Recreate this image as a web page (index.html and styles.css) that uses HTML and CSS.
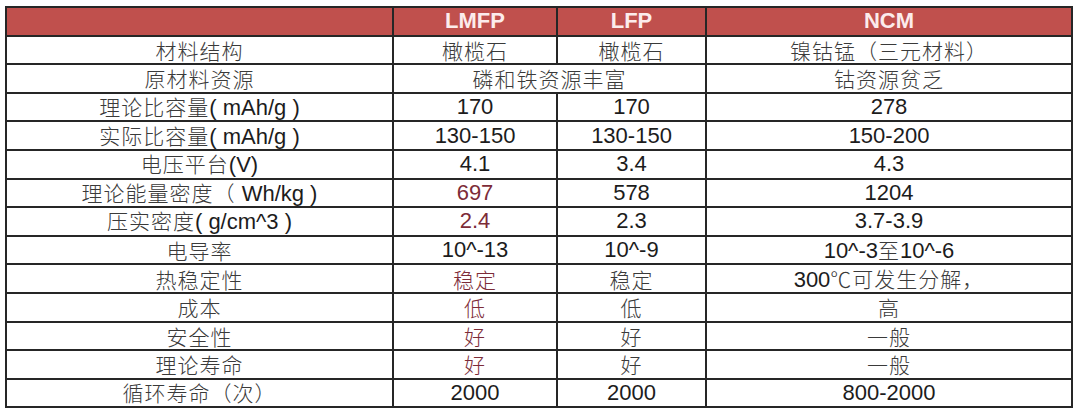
FILE: index.html
```html
<!DOCTYPE html>
<html lang="zh-CN">
<head>
<meta charset="utf-8">
<title>LMFP LFP NCM 对比</title>
<link rel="stylesheet" href="styles.css">
</head>
<body>
<table class="cmp">
  <colgroup>
    <col class="c1"><col class="c2"><col class="c3"><col class="c4">
  </colgroup>
  <thead>
    <tr><th></th><th>LMFP</th><th>LFP</th><th>NCM</th></tr>
  </thead>
  <tbody>
    <tr><td class="zh">材料结构</td><td class="zh">橄榄石</td><td class="zh">橄榄石</td><td class="zh">镍钴锰（三元材料）</td></tr>
    <tr><td class="zh">原材料资源</td><td class="zh" colspan="2">磷和铁资源丰富</td><td class="zh">钴资源贫乏</td></tr>
    <tr><td><span class="zh">理论比容量</span>( mAh/g )</td><td>170</td><td>170</td><td>278</td></tr>
    <tr><td><span class="zh">实际比容量</span>( mAh/g )</td><td>130-150</td><td>130-150</td><td>150-200</td></tr>
    <tr><td><span class="zh">电压平台</span>(V)</td><td>4.1</td><td>3.4</td><td>4.3</td></tr>
    <tr><td><span class="zh">理论能量密度（</span> Wh/kg )</td><td class="red">697</td><td>578</td><td>1204</td></tr>
    <tr><td><span class="zh">压实密度</span>( g/cm^3 )</td><td class="red">2.4</td><td>2.3</td><td>3.7-3.9</td></tr>
    <tr><td class="zh">电导率</td><td>10^-13</td><td>10^-9</td><td>10^-3<span class="zh">至</span>10^-6</td></tr>
    <tr><td class="zh">热稳定性</td><td class="zh red">稳定</td><td class="zh">稳定</td><td>300<span class="zh">℃可发生分解，</span></td></tr>
    <tr><td class="zh">成本</td><td class="zh red">低</td><td class="zh">低</td><td class="zh">高</td></tr>
    <tr><td class="zh">安全性</td><td class="zh red">好</td><td class="zh">好</td><td class="zh">一般</td></tr>
    <tr><td class="zh">理论寿命</td><td class="zh red">好</td><td class="zh">好</td><td class="zh">一般</td></tr>
    <tr><td><span class="zh">循环寿命（次）</span></td><td>2000</td><td>2000</td><td>800-2000</td></tr>
  </tbody>
</table>
</body>
</html>
```
FILE: styles.css
```css
html, body {
  margin: 0;
  padding: 0;
  background: #ffffff;
}
body {
  padding: 6px 0 0 5px;
  font-family: "Liberation Sans", "Noto Sans CJK SC", sans-serif;
}
.cmp {
  border-collapse: collapse;
  table-layout: fixed;
  width: 1066px;
  font-size: 22px;
  color: #1c1c1c;
}
.c1 { width: 387px; }
.c2 { width: 164px; }
.c3 { width: 149px; }
.c4 { width: 366px; }
.cmp th, .cmp td {
  border: 2px solid #262626;
  padding: 0;
  height: 26.6px;
  line-height: 24px;
  text-align: center;
  vertical-align: middle;
  white-space: nowrap;
}
.cmp th {
  background: #c0504d;
  color: #fcecec;
  font-weight: bold;
  font-size: 22px;
}
.zh {
  font-family: "Noto Sans CJK SC", sans-serif;
  font-weight: 300;
  color: #3a3a3a;
  font-size: 21px;
  letter-spacing: 1px;
}
.red {
  color: #7d2c38;
}
```
